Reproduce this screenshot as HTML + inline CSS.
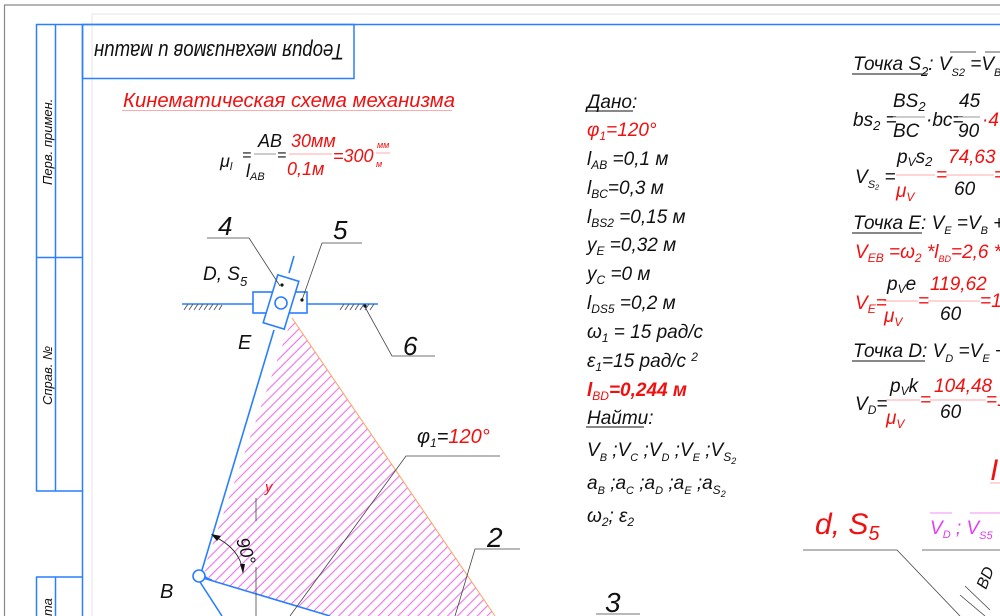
<!DOCTYPE html>
<html><head><meta charset="utf-8"><style>
html,body{margin:0;padding:0;background:#fff;overflow:hidden}
svg{display:block}
text{font-family:"Liberation Sans","DejaVu Sans",sans-serif;font-style:italic;}
.b{fill:#111}.r{fill:#f01010}.m{fill:#e040f0}
</style></head><body>
<svg width="1000" height="616" viewBox="0 0 1000 616" xmlns="http://www.w3.org/2000/svg">
<defs>
<pattern id="h" patternUnits="userSpaceOnUse" width="7" height="7" patternTransform="rotate(45)">
<line x1="3" y1="0" x2="3" y2="7" stroke="#f070f0" stroke-width="1.1"/>
</pattern>
</defs>
<line x1="4" y1="5" x2="1000" y2="5" stroke="#888" stroke-width="1.2"/>
<line x1="4.5" y1="5" x2="4.5" y2="616" stroke="#888" stroke-width="1.2"/>
<line x1="92" y1="14" x2="1000" y2="14" stroke="#e6e6e6"/>
<line x1="92" y1="14" x2="92" y2="616" stroke="#e6e6e6"/>
<g stroke="#2a7fff" stroke-width="1.5" fill="none">
<line x1="36" y1="24.5" x2="1000" y2="24.5"/>
<line x1="36.5" y1="24" x2="36.5" y2="491"/>
<line x1="55.5" y1="24" x2="55.5" y2="491"/>
<line x1="82.5" y1="24" x2="82.5" y2="616"/>
<line x1="36" y1="257.5" x2="82" y2="257.5"/>
<line x1="36" y1="491" x2="82" y2="491"/>
<line x1="36" y1="577" x2="82" y2="577"/>
<line x1="36.5" y1="577" x2="36.5" y2="616"/>
<line x1="55.5" y1="577" x2="55.5" y2="616"/>
<rect x="82.5" y="24.5" width="271.5" height="54"/>
</g>
<text class="b" font-size="22" transform="translate(344,44) rotate(180)" textLength="250" lengthAdjust="spacingAndGlyphs">Теория механизмов и машин</text>
<text class="b" font-size="13" transform="translate(52,185) rotate(-90)">Перв. примен.</text>
<text class="b" font-size="13" transform="translate(52,405) rotate(-90)">Справ. №</text>
<text class="b" font-size="13" transform="translate(52,616) rotate(-90)">та</text>

<text class="r" font-size="20" x="123" y="107" textLength="332" lengthAdjust="spacingAndGlyphs">Кинематическая схема механизма</text>
<line x1="122" y1="110.5" x2="452" y2="110.5" stroke="#ffaaaa"/>
<text class="b" font-size="18" x="220" y="167">μ<tspan font-size="11" dy="3">l</tspan></text>
<text class="b" font-size="16" x="242" y="160">=</text>
<text class="b" font-size="18" x="258" y="147">AB</text>
<line x1="254" y1="154" x2="276" y2="154" stroke="#999"/>
<text class="b" font-size="18" x="246" y="177">l<tspan font-size="11" dy="3">AB</tspan></text>
<text class="b" font-size="16" x="277" y="160">=</text>
<text class="r" font-size="18" x="291" y="147">30мм</text>
<line x1="289" y1="154" x2="332" y2="154" stroke="#ffaaaa"/>
<text class="r" font-size="18" x="287" y="175">0,1м</text>
<text class="r" font-size="18" x="333" y="162">=300</text>
<text class="r" font-size="9" x="377" y="148">мм</text>
<line x1="376" y1="153" x2="390" y2="153" stroke="#ffaaaa"/>
<text class="r" font-size="9" x="376" y="167">м</text>

<polygon points="292,318 204,569 210,580 330,616 495,616" fill="url(#h)"/>
<line x1="292" y1="318" x2="495" y2="616" stroke="#ffa060" stroke-width="1"/>
<g stroke="#2a7fff" stroke-width="1.6" fill="none">
<line x1="274" y1="330" x2="202" y2="570"/>
<path d="M202,570 Q203,578 212,580"/>
<line x1="203" y1="578" x2="330" y2="616"/>
<line x1="200" y1="582" x2="222" y2="616"/>
<circle cx="199" cy="576" r="6" fill="#fff"/>
<line x1="182" y1="304" x2="253" y2="304"/>
<line x1="307" y1="304" x2="378" y2="304"/>
<rect x="253" y="292" width="54" height="21" fill="#fff"/>
<g transform="rotate(17 281 302)"><rect x="270" y="277" width="22" height="50" fill="#fff"/></g>
<line x1="289" y1="273" x2="294" y2="256"/>
<circle cx="281" cy="303" r="6"/>
</g>
<g stroke="#555" stroke-width="0.9">
<path d="M184,310l4,-6M189,310l4,-6M194,310l4,-6M199,310l4,-6M204,310l4,-6M209,310l4,-6M214,310l4,-6M219,310l3,-5"/>
<path d="M340,310l4,-6M345,310l4,-6M350,310l4,-6M355,310l4,-6M360,310l4,-6M365,310l4,-6M370,310l4,-6"/>
</g>
<g stroke="#444" stroke-width="0.8" fill="none">
<polyline points="207,238 249,238 280,286"/>
<polyline points="362,243 322,243 302,300"/>
<polyline points="365,307 392,356 435,356"/>
<polyline points="500,456 406,456 290,616"/>
<polyline points="520,549 475,549 455,616"/>
<line x1="596" y1="614" x2="640" y2="614"/>
<line x1="256" y1="498" x2="256" y2="521"/>
<line x1="256" y1="567" x2="256" y2="616"/>
<polyline points="803,550 897,550 960,616"/>
<line x1="922" y1="550" x2="1000" y2="550"/>
<line x1="965" y1="586" x2="990" y2="610"/>
<line x1="960" y1="595" x2="985" y2="616"/>
<path d="M213,536 Q240,548 243,572" stroke="#111"/>
</g>
<path d="M211,534 l10,2 l-4,5z M243,574 l-3,-10 l5,0z" fill="#111"/>
<circle cx="282" cy="285" r="1.6" fill="#111"/>
<circle cx="302" cy="300" r="1.6" fill="#111"/>
<circle cx="365" cy="306" r="1.6" fill="#111"/>

<text class="b" font-size="26" x="218" y="235">4</text>
<text class="b" font-size="26" x="333" y="239">5</text>
<text class="b" font-size="19" x="203" y="280">D, S<tspan font-size="13" dy="6">5</tspan></text>
<text class="b" font-size="20" x="238" y="349">E</text>
<text class="b" font-size="26" x="403" y="355">6</text>
<text class="b" font-size="20" x="417" y="443">φ<tspan font-size="12" dy="4">1</tspan><tspan dy="-4">=</tspan><tspan class="r">120°</tspan></text>
<text class="r" font-size="15" x="265" y="492">y</text>
<text class="b" font-size="18" transform="translate(236,540) rotate(72)">90°</text>
<text class="b" font-size="20" x="160" y="598">B</text>
<text class="b" font-size="28" x="487" y="547">2</text>
<text class="b" font-size="28" x="605" y="612">3</text>

<g font-size="19">
<text class="b" x="587" y="108">Дано:</text>
<line x1="586" y1="111" x2="633" y2="111" stroke="#111"/>
<text class="r" x="587" y="136">φ<tspan font-size="12" dy="4">1</tspan><tspan dy="-4">=120°</tspan></text>
<text class="b" x="587" y="165">l<tspan font-size="12" dy="4">AB</tspan><tspan dy="-4"> =0,1 м</tspan></text>
<text class="b" x="587" y="194">l<tspan font-size="12" dy="4">BC</tspan><tspan dy="-4">=0,3 м</tspan></text>
<text class="b" x="587" y="223">l<tspan font-size="12" dy="4">BS2</tspan><tspan dy="-4"> =0,15 м</tspan></text>
<text class="b" x="587" y="251">y<tspan font-size="12" dy="4">E</tspan><tspan dy="-4"> =0,32 м</tspan></text>
<text class="b" x="587" y="280">y<tspan font-size="12" dy="4">C</tspan><tspan dy="-4"> =0 м</tspan></text>
<text class="b" x="587" y="309">l<tspan font-size="12" dy="4">DS5</tspan><tspan dy="-4"> =0,2 м</tspan></text>
<text class="b" x="587" y="338">ω<tspan font-size="12" dy="4">1</tspan><tspan dy="-4"> = 15 рад/с</tspan></text>
<text class="b" x="587" y="367">ε<tspan font-size="12" dy="4">1</tspan><tspan dy="-4">=15 рад/с </tspan><tspan font-size="12" dy="-6">2</tspan></text>
<text class="r" x="587" y="396" font-weight="bold">l<tspan font-size="12" dy="4" font-weight="normal">BD</tspan><tspan dy="-4">=0,244 м</tspan></text>
<text class="b" x="587" y="424">Найти:</text>
<line x1="586" y1="427" x2="644" y2="427" stroke="#111"/>
<text class="b" x="587" y="456">V<tspan font-size="11" dy="5">B</tspan><tspan dy="-5"> ;V</tspan><tspan font-size="11" dy="5">C</tspan><tspan dy="-5"> ;V</tspan><tspan font-size="11" dy="5">D</tspan><tspan dy="-5"> ;V</tspan><tspan font-size="11" dy="5">E</tspan><tspan dy="-5"> ;V</tspan><tspan font-size="12" dy="5">S</tspan><tspan font-size="9" dy="3">2</tspan></text>
<text class="b" x="587" y="489">a<tspan font-size="11" dy="5">B</tspan><tspan dy="-5"> ;a</tspan><tspan font-size="11" dy="5">C</tspan><tspan dy="-5"> ;a</tspan><tspan font-size="11" dy="5">D</tspan><tspan dy="-5"> ;a</tspan><tspan font-size="11" dy="5">E</tspan><tspan dy="-5"> ;a</tspan><tspan font-size="12" dy="5">S</tspan><tspan font-size="9" dy="3">2</tspan></text>
<text class="b" x="587" y="522">ω<tspan font-size="12" dy="4">2</tspan><tspan dy="-4">; ε</tspan><tspan font-size="12" dy="4">2</tspan></text>
</g>

<g font-size="19">
<text class="b" x="853" y="70">Точка S<tspan font-size="13" dy="6">2</tspan><tspan dy="-6">: V</tspan><tspan font-size="11" dy="6">S2</tspan><tspan dy="-6"> =V</tspan><tspan font-size="11" dy="6">B</tspan></text>
<line x1="852" y1="74" x2="928" y2="74" stroke="#111"/>
<line x1="950" y1="52" x2="976" y2="52" stroke="#555"/><line x1="985" y1="52" x2="1000" y2="52" stroke="#555"/>
<text class="b" x="853" y="126">bs<tspan font-size="13" dy="4">2</tspan><tspan dy="-4"> =</tspan></text>
<text class="b" x="893" y="107">BS<tspan font-size="13" dy="4">2</tspan></text>
<line x1="893" y1="117" x2="925" y2="117" stroke="#999"/>
<text class="b" x="893" y="137">BC</text>
<text class="b" x="926" y="126">·bc=</text>
<text class="b" x="959" y="107">45</text>
<line x1="958" y1="117" x2="980" y2="117" stroke="#999"/>
<text class="b" x="958" y="137">90</text>
<text class="r" x="982" y="126">·4</text>
<text class="b" x="855" y="183">V<tspan font-size="11" dy="5">S₂</tspan><tspan dy="-5"> =</tspan></text>
<text class="b" x="897" y="163">p<tspan font-size="12" dy="3">V</tspan><tspan dy="-3">s</tspan><tspan font-size="13" dy="3">2</tspan></text>
<line x1="896" y1="175" x2="935" y2="175" stroke="#ffaaaa"/>
<text class="r" x="896" y="197">μ<tspan font-size="12" dy="4">V</tspan></text>
<text class="r" x="936" y="181">=</text>
<text class="r" x="948" y="163">74,63</text>
<line x1="946" y1="175" x2="994" y2="175" stroke="#ffaaaa"/>
<text class="b" x="954" y="195">60</text>
<text class="r" x="994" y="181">=</text>
<text class="b" x="853" y="229">Точка E: V<tspan font-size="11" dy="5">E</tspan><tspan dy="-5"> =V</tspan><tspan font-size="11" dy="5">B</tspan><tspan dy="-5"> +</tspan></text>
<line x1="852" y1="233" x2="922" y2="233" stroke="#111"/>
<text class="r" x="855" y="258">V<tspan font-size="12" dy="4">EB</tspan><tspan dy="-4"> =ω</tspan><tspan font-size="12" dy="4">2</tspan><tspan dy="-4"> *l</tspan><tspan font-size="9" dy="4">BD</tspan><tspan dy="-4">=2,6 *0,</tspan></text>
<text class="r" x="855" y="309">V<tspan font-size="12" dy="4">E</tspan><tspan dy="-4">=</tspan></text>
<text class="b" x="887" y="290">p<tspan font-size="12" dy="3">V</tspan><tspan dy="-3">e</tspan></text>
<line x1="884" y1="301" x2="918" y2="301" stroke="#ffaaaa"/>
<text class="r" x="884" y="322">μ<tspan font-size="12" dy="4">V</tspan></text>
<text class="r" x="918" y="307">=</text>
<text class="r" x="930" y="290">119,62</text>
<line x1="928" y1="301" x2="980" y2="301" stroke="#ffaaaa"/>
<text class="b" x="940" y="320">60</text>
<text class="r" x="980" y="307">=1,</text>
<text class="b" x="853" y="357">Точка D: V<tspan font-size="11" dy="5">D</tspan><tspan dy="-5"> =V</tspan><tspan font-size="11" dy="5">E</tspan><tspan dy="-5"> +</tspan></text>
<line x1="852" y1="361" x2="925" y2="361" stroke="#111"/>
<text class="b" x="855" y="410">V<tspan font-size="12" dy="4">D</tspan><tspan dy="-4">=</tspan></text>
<text class="b" x="890" y="392">p<tspan font-size="12" dy="3">V</tspan><tspan dy="-3">k</tspan></text>
<line x1="886" y1="400" x2="920" y2="400" stroke="#ffaaaa"/>
<text class="r" x="886" y="424">μ<tspan font-size="12" dy="4">V</tspan></text>
<text class="r" x="920" y="406">=</text>
<text class="r" x="934" y="392">104,48</text>
<line x1="930" y1="400" x2="986" y2="400" stroke="#ffaaaa"/>
<text class="b" x="940" y="418">60</text>
<text class="r" x="986" y="406">=1</text>
</g>
<text class="r" font-size="30" x="990" y="480">I</text>
<line x1="990" y1="483" x2="1000" y2="483" stroke="#ffaaaa"/>
<text class="r" font-size="30" x="815" y="534">d, S<tspan font-size="20" dy="6">5</tspan></text>
<text class="m" font-size="19" x="930" y="534">V<tspan font-size="11" dy="4">D</tspan><tspan dy="-4"> ; V</tspan><tspan font-size="11" dy="5">S5</tspan></text>
<line x1="930" y1="513" x2="952" y2="513" stroke="#f090f0"/><line x1="970" y1="513" x2="1000" y2="513" stroke="#f090f0"/>
<text class="b" font-size="16" transform="translate(986,590) rotate(-68)">BD</text>
</svg>
</body></html>
